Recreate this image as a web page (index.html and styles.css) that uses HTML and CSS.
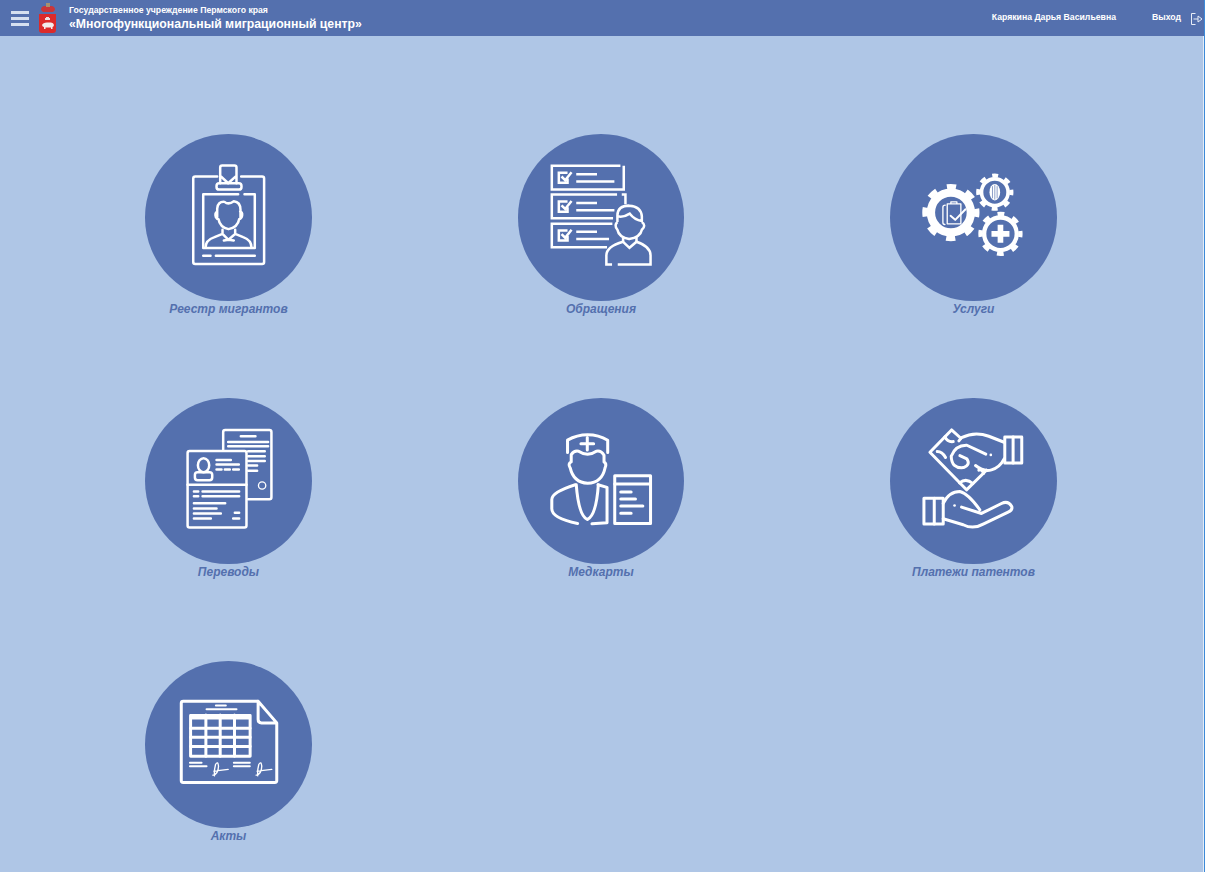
FILE: index.html
```html
<!DOCTYPE html>
<html lang="ru">
<head>
    <meta charset="UTF-8">
    <title>Многофункциональный миграционный центр</title>
    <link rel="stylesheet" href="styles.css">
</head>
<body>
    <!-- Header -->
    <header class="topbar">
        <button class="menu-btn" type="button" aria-label="Меню"><span></span><span></span><span></span></button>
        <svg class="crest" viewBox="0 0 18 30" aria-hidden="true">
            <path d="M2 7 Q2 3 6 3 H12 Q16 3 16 7 L14 9 H4 Z" fill="#c9363a"/>
            <path d="M7 0 H11 V4 H7 Z" fill="#a8906f"/>
            <path d="M0 11 H17 V27 Q17 30 14 30 H3 Q0 30 0 27 Z" fill="#dc2a2a"/>
            <path d="M7 14 H10 V15 H11 V17 H6 V15 H7 Z" fill="#f0dede"/>
            <path d="M3 22 Q4 19.5 8 19.5 H12 Q14.5 19.5 15 22 Q14.5 24 13.5 24 V26 H12 V24.5 H6.5 V26 H5 V24 Q3.5 24 3 22 Z" fill="#f3ecec"/>
        </svg>
        <div class="org">
            <div class="org-sub">Государственное учреждение Пермского края</div>
            <div class="org-name">«Многофункциональный миграционный центр»</div>
        </div>
        <div class="user">Карякина Дарья Васильевна</div>
        <a class="logout" href="#">Выход</a>
        <svg class="logout-icon" viewBox="0 0 12 12" aria-hidden="true">
            <path d="M4.5 .5 H.5 V11.5 H4.5 M2.5 6 H7 V3 L11 6 L7 9 V6"/>
        </svg>
    </header>

    <!-- Tiles -->
    <main class="tiles">
        <a class="tile" href="#">
            <span class="circle">
                <svg class="icon" viewBox="15 12 501 501" aria-hidden="true">
                    <path d="M232 140 H166 Q160 140 160 146 V397 Q160 403 166 403 H367 Q373 403 373 397 V146 Q373 140 367 140 H304"/>
                    <path d="M241 160 V113 Q241 107 247 107 H284 Q290 107 290 113 V160 M244 140 L265 160 L287 140"/>
                    <rect x="230" y="160" width="75" height="19" rx="8"/>
                    <path d="M295 193 H190 V355 H345 V193 H314"/>
                    <path d="M232 262 V236 Q234 214 254 216 Q266 226 282 214 Q302 216 302 240 V262 M232 245 Q224 250 228 262 Q231 268 236 268 Q240 292 266 298 Q294 292 298 268 Q306 266 307 256 Q308 248 301 245"/>
                    <path d="M197 353 Q197 331 224 322 L248 312 V300 M335 353 Q335 331 310 322 L286 312 V300 M248 312 L266 330 L286 312 M252 332 L266 330 L282 332"/>
                    <path d="M190 378 H212 M228 378 H345"/>
                </svg>
            </span>
            <span class="label">Реестр мигрантов</span>
        </a>
        <a class="tile" href="#">
            <span class="circle">
                <svg class="icon icon-square" viewBox="24 12 498 498" aria-hidden="true">
                    <path d="M330 107 H125 V178 H340 V107"/>
                    <path d="M320 193 H125 V264 H308 M334 193 H345 V222"/>
                    <path d="M306 280 H125 V350 H290"/>
                    <path d="M172 128 H146 V158 H172 V145 M154 139 L165 150 L184 126"/>
                    <path d="M198 132 H260 M198 154 H312"/>
                    <path d="M172 214 H146 V244 H172 V231 M154 225 L165 236 L184 212"/>
                    <path d="M198 218 H260 M198 240 H312"/>
                    <path d="M172 300 H146 V330 H172 V317 M154 311 L165 322 L184 298"/>
                    <path d="M198 304 H260 M198 326 H296"/>
                    <path d="M321 275 V255 Q322 226 356 226 Q392 228 394 258 V275 M321 258 Q340 262 358 250 Q372 268 394 272 M321 275 Q310 285 321 298 Q325 320 356 326 Q390 320 394 298 Q408 285 394 275"/>
                    <path d="M338 318 V334 M378 318 V334"/>
                    <path d="M305 402 H288 V375 Q288 348 338 334 L357 352 L378 334 Q420 348 420 375 V402 H322"/>
                </svg>
            </span>
            <span class="label">Обращения</span>
        </a>
        <a class="tile" href="#">
            <span class="circle">
                <svg class="icon" viewBox="15 12 501 501" aria-hidden="true">
                    <!-- big gear -->
                    <circle class="ring" cx="198" cy="248" r="60" stroke-width="25"/>
                    <circle class="ring" cx="198" cy="248" r="78" stroke-width="16" pathLength="80" stroke-dasharray="4.6 5.4" stroke-dashoffset="2.3"/>
                    <path class="thin" d="M181 226 Q174 226 174 232 V278 Q174 284 180 284"/>
                    <path class="thin" d="M187 222 H228 V282 H187 Z M198 222 V216 H216 V222"/>
                    <path class="check" d="M197 258 L211 270 L242 238"/>
                    <!-- small gear -->
                    <circle class="ring" cx="330" cy="187" r="40" stroke-width="11"/>
                    <circle class="ring" cx="330" cy="187" r="50" stroke-width="12" pathLength="80" stroke-dasharray="4.6 5.4" stroke-dashoffset="2.3"/>
                    <ellipse class="print" cx="330" cy="187" rx="16" ry="25"/>
                    <path class="print-lines" d="M323 170 V204 M330 166 V208 M337 170 V204"/>
                    <!-- plus gear -->
                    <circle class="ring" cx="347" cy="312" r="49" stroke-width="13"/>
                    <circle class="ring" cx="347" cy="312" r="60" stroke-width="13" pathLength="80" stroke-dasharray="4.4 5.6" stroke-dashoffset="2.2"/>
                    <path class="plus" d="M320 312 H374 M347 285 V339"/>
                </svg>
            </span>
            <span class="label">Услуги</span>
        </a>
        <a class="tile" href="#">
            <span class="circle">
                <svg class="icon" viewBox="15 9 501 501" aria-hidden="true">
                    <path d="M250 164 V111 Q250 105 256 105 H389 Q395 105 395 111 V307 Q395 313 389 313 H325"/>
                    <path d="M303 124 H347 M265 141 H385 M265 154 H385 M325 169 H375 M325 184 H375 M325 198 H375 M325 212 H352 M325 228 H352"/>
                    <circle class="thin" cx="367" cy="272" r="11"/>
                    <rect x="143" y="168" width="177" height="230" rx="6"/>
                    <path d="M143 270 H320"/>
                    <ellipse cx="191" cy="211" rx="17" ry="21"/>
                    <rect x="165" y="232" width="52" height="24" rx="8"/>
                    <path d="M230 195 H273 M230 209 H297 M230 224 H245 M255 224 H270 M280 224 H297"/>
                    <path d="M162 290 H175 M188 290 H298 M162 304 H175 M188 304 H298 M162 325 H256 M162 341 H230 M162 356 H243 M285 354 H298 M162 371 H213 M280 371 H298"/>
                </svg>
            </span>
            <span class="label">Переводы</span>
        </a>
        <a class="tile" href="#">
            <span class="circle">
                <svg class="icon icon-bold" viewBox="24 9 498 498" aria-hidden="true">
                    <path d="M172 172 V135 Q200 119 232 119 Q265 119 292 135 V172"/>
                    <path d="M212 146 H250 M231 127 V164"/>
                    <path d="M183 178 Q192 165 205 168 Q232 186 258 168 Q272 165 281 180 V200 Q290 205 284 218 Q275 262 232 264 Q190 262 180 218 Q172 205 183 200 Z"/>
                    <path d="M195 268 Q125 290 125 312 V340 Q125 368 202 384 M263 268 L290 276 V382 L245 385"/>
                    <path d="M198 268 Q205 360 231 372 Q258 360 264 268"/>
                    <rect x="313" y="241" width="107" height="143"/>
                    <path d="M313 266 H420"/>
                    <path d="M331 290 H362 M331 311 H375 M331 332 H397 M331 353 H362"/>
                </svg>
            </span>
            <span class="label">Медкарты</span>
        </a>
        <a class="tile" href="#">
            <span class="circle">
                <svg class="icon icon-bold" viewBox="15 9 501 501" aria-hidden="true">
                    <!-- money -->
                    <path d="M228 130 L200 105 L135 172 L245 285 L305 226"/>
                    <path d="M180 126 Q188 142 205 140 M157 170 Q172 170 182 188 M224 264 Q244 248 264 266 M282 226 Q292 222 296 236"/>
                    <!-- upper hand -->
                    <rect x="360" y="126" width="51" height="78"/>
                    <path d="M385 126 V204"/>
                    <path d="M358 142 L312 124 Q270 108 230 128 L222 138 M358 192 Q345 218 320 225 Q298 232 272 212"/>
                    <path d="M303 178 L246 151 Q212 150 199 184 Q200 222 236 218 Q258 210 246 192 L225 182"/>
                    <circle class="dot" cx="318" cy="180" r="4"/>
                    <!-- lower hand -->
                    <rect x="117" y="310" width="58" height="78"/>
                    <path d="M148 310 V388"/>
                    <path d="M175 326 Q192 290 225 290 Q250 296 285 345 M230 337 L290 356 L350 326 Q370 316 381 335 Q384 346 370 352 L295 388 Q265 405 235 390 L175 372"/>
                    <circle class="dot" cx="209" cy="332" r="4"/>
                </svg>
            </span>
            <span class="label">Платежи патентов</span>
        </a>
        <a class="tile" href="#">
            <span class="circle">
                <svg class="icon icon-bold" viewBox="15 9 501 501" aria-hidden="true">
                    <path d="M355 130 H130 Q124 130 124 136 V368 Q124 374 130 374 H405 Q411 374 411 368 V195 L355 130 V185 Q355 195 365 195 H411"/>
                    <path class="fine" d="M228 143 H258 M200 154 H290"/>
                    <rect x="152" y="173" width="179" height="122"/>
                    <path class="head" d="M152 177 H331"/>
                    <path d="M152 211 H331 M152 238 H331 M152 266 H331 M198 171 V295 M241 171 V295 M284 171 V295"/>
                    <path class="fine" d="M150 315 H185 M150 325 H200 M282 315 H330 M282 325 H330"/>
                    <path class="thin" d="M219 352 Q235 350 236 325 Q234 308 227 320 Q222 340 224 354 M222 340 L265 335"/>
                    <path class="thin" d="M349 352 Q365 350 366 325 Q364 308 357 320 Q352 340 354 354 M352 340 L396 335"/>
                </svg>
            </span>
            <span class="label">Акты</span>
        </a>
    </main>
</body>
</html>
```

FILE: styles.css
```css
html, body {
    margin: 0;
    padding: 0;
    height: 100%;
    overflow: hidden;
}
body {
    box-sizing: border-box;
    display: flex;
    flex-direction: column;
    font-family: "Liberation Sans", Arial, sans-serif;
    background-color: #afc6e6;
    border-right: 1px solid #3d8ad8;
}

/* Header */
.topbar {
    display: flex;
    align-items: center;
    flex: none;
    height: 36px;
    background-color: #5470ae;
    color: #fff;
    font-weight: bold;
}
.menu-btn {
    display: flex;
    flex-direction: column;
    gap: 3px;
    width: 18px;
    margin: 0 0 0 11px;
    padding: 0;
    border: 0;
    background: none;
}
.menu-btn span {
    display: block;
    height: 3px;
    background-color: #d5dff0;
}
.crest {
    width: 18px;
    height: 30px;
    margin: 0 12px 0 10px;
}
.org {
    flex: 1;
}
.org-sub {
    font-size: 8.7px;
    line-height: 10px;
}
.org-name {
    font-size: 12.25px;
    line-height: 15px;
    margin-top: 2px;
}
.user {
    font-size: 8.7px;
    margin: 0 36px 2px 0;
}
.logout {
    color: #fff;
    font-size: 8.7px;
    text-decoration: none;
    margin: 0 10px 2px 0;
}
.logout-icon {
    width: 12px;
    height: 12px;
    margin: 1px 1px 0 0;
    fill: none;
    stroke: #e8edf7;
    stroke-width: 1;
}

/* Tiles */
.tiles {
    flex: 1;
    display: grid;
    grid-template-columns: repeat(3, 372.5px);
    grid-template-rows: repeat(2, 263.5px) auto;
    padding: 98px 0 0 42.25px;
    border-right: 1px solid #e3ebf6;
}
.tile {
    display: flex;
    flex-direction: column;
    align-items: center;
    text-decoration: none;
}
.circle {
    display: block;
    width: 166.7px;
    height: 166.7px;
    border-radius: 50%;
    background-color: #5470ae;
}
.label {
    margin-top: 1px;
    font-size: 12px;
    line-height: 14px;
    font-weight: bold;
    font-style: italic;
    color: #5470ae;
}

/* Icons are drawn white on the circle */
.icon {
    display: block;
    width: 100%;
    height: 100%;
    fill: none;
    stroke: #fff;
    stroke-width: 7.5;
    stroke-linecap: round;
    stroke-linejoin: round;
}
.icon-square {
    stroke-linecap: butt;
    stroke-linejoin: miter;
}
.icon-bold {
    stroke-width: 9;
}
.icon .fine {
    stroke-width: 6;
}
.icon .thin {
    stroke-width: 4;
}
.icon .head {
    stroke-width: 16;
    stroke-linecap: butt;
}
.icon .ring {
    stroke-linecap: butt;
}
.icon .check {
    stroke-width: 6;
}
.icon .plus {
    stroke-width: 17;
    stroke-linecap: butt;
}
.icon .print {
    fill: #fff;
    stroke: none;
}
.icon .print-lines {
    stroke: #5470ae;
    stroke-width: 2;
}
.icon .dot {
    fill: #fff;
    stroke: none;
}
```
